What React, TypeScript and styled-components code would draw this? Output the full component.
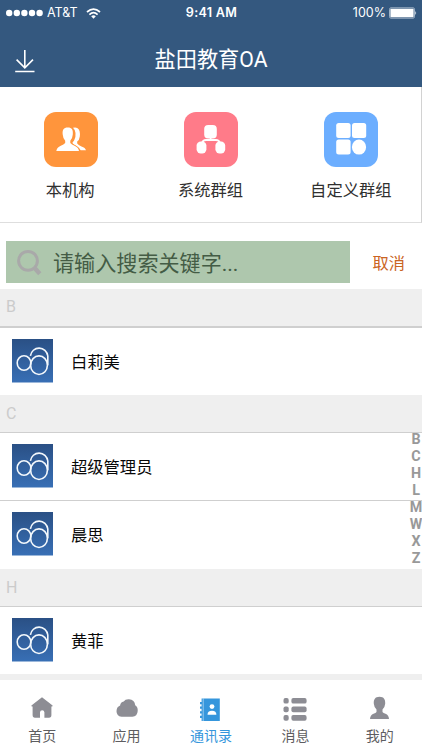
import React from "react";
import styled, { createGlobalStyle } from "styled-components";

const GlobalStyle = createGlobalStyle`
  * { box-sizing: border-box; }
  body { margin: 0; background: #fff; }
`;

const Screen = styled.div`
  position: relative;
  width: 422px;
  height: 750px;
  overflow: hidden;
  display: flex;
  flex-direction: column;
  background: #fff;
  font-family: Roboto, "Noto Sans CJK SC", sans-serif;
  white-space: nowrap;
`;

const Header = styled.header`
  height: 87px;
  flex: none;
  background: #34587f;
  color: #fff;
`;

const StatusBar = styled.div`
  height: 26px;
  padding: 0 5px 0 6px;
  display: grid;
  grid-template-columns: 1fr auto 1fr;
  align-items: center;
  font: 400 12.5px/26px Inter, sans-serif;
`;

const StatusGroup = styled.div<{ $end?: boolean }>`
  display: flex;
  align-items: center;
  justify-content: ${(p) => (p.$end ? "flex-end" : "flex-start")};
  gap: ${(p) => (p.$end ? "3px" : "4px")};
  svg { display: block; }
`;

const Carrier = styled.span`
  margin-right: 4px;
`;

const Clock = styled.span`
  font-weight: 600;
  font-size: 12.6px;
  letter-spacing: 0.3px;
`;

const TitleBar = styled.div`
  height: 61px;
  padding: 0 14px;
  display: grid;
  grid-template-columns: 40px 1fr 40px;
  align-items: center;
  svg { display: block; margin-top: 9px; }
`;

const Title = styled.h1`
  margin: 6px 0 0;
  text-align: center;
  font-size: 21.2px;
  line-height: 30px;
  font-weight: 400;
`;

const GroupGrid = styled.section`
  height: 136px;
  flex: none;
  padding: 25px 0 0;
  display: grid;
  grid-template-columns: repeat(3, 1fr);
  border-bottom: 1px solid #dedede;
  border-right: 1px solid #d2d2d2;
`;

const GroupItem = styled.div`
  display: flex;
  flex-direction: column;
  align-items: center;
  gap: 12px;
  font-size: 16.3px;
  line-height: 24px;
  color: #303030;
`;

const GroupTile = styled.div<{ $color: string }>`
  width: 54px;
  height: 55px;
  margin-left: 1px;
  border-radius: 12px;
  background: ${(p) => p.$color};
  svg { display: block; }
`;

const SearchRow = styled.div`
  height: 66px;
  flex: none;
  padding: 18px 17px 6px 6px;
  display: flex;
  align-items: center;
  justify-content: space-between;
`;

const SearchField = styled.div`
  width: 344px;
  height: 42px;
  padding-left: 10px;
  display: flex;
  align-items: center;
  gap: 11px;
  background: #aec7ad;
  color: #445c45;
  font-size: 21.1px;
  line-height: 42px;
  svg { flex: none; }
  span { padding-top: 3px; }
`;

const Cancel = styled.span`
  padding-top: 3px;
  color: #ca6423;
  font-size: 16.3px;
  line-height: 42px;
`;

const SectionHead = styled.div<{ $first?: boolean }>`
  height: ${(p) => (p.$first ? 39 : 38)}px;
  flex: none;
  padding-left: 6px;
  background: #efefef;
  border-bottom: ${(p) => (p.$first ? 2 : 1)}px solid #cfcfcf;
  color: #cbcbcb;
  font-size: 16px;
  line-height: ${(p) => (p.$first ? 35 : 37)}px;
`;

const ContactRow = styled.div<{ $divided?: boolean; $tall?: boolean }>`
  height: ${(p) => (p.$tall ? 68 : 67)}px;
  flex: none;
  padding: 11px 12px 0;
  display: flex;
  align-items: flex-start;
  gap: 18px;
  border-bottom: ${(p) => (p.$divided ? "1px solid #cfcfcf" : "none")};
  color: #080808;
  font-size: 16.3px;
  line-height: 48px;
`;

const NextSection = styled.div`
  flex: 1;
  background: #efefef;
`;

const IndexRail = styled.nav`
  position: absolute;
  right: 0;
  top: 431px;
  width: 12px;
  display: flex;
  flex-direction: column;
  align-items: center;
  color: #999;
  font-size: 14.3px;
  font-weight: 700;
  line-height: 17px;
`;

const TabBar = styled.nav`
  height: 70px;
  flex: none;
  padding-top: 15px;
  display: grid;
  grid-template-columns: repeat(5, 1fr);
  background: #fff;
`;

const Tab = styled.div<{ $active?: boolean }>`
  display: flex;
  flex-direction: column;
  align-items: center;
  gap: 3px;
  color: ${(p) => (p.$active ? "#3596dc" : "#5d5d60")};
  font-size: 14px;
  line-height: 20px;
  svg { color: ${(p) => (p.$active ? "#3596dc" : "#8d8d94")}; display: block; }
`;

const SignalIcon = () => (
  <svg width="37" height="8" viewBox="0 0 37 8" fill="#fff">
    {[3.2, 10.8, 18.4, 26, 33.6].map((x) => (
      <circle key={x} cx={x} cy="4" r="3.2" />
    ))}
  </svg>
);

const WifiIcon = () => (
  <svg width="15" height="11" viewBox="0 0 15 11" fill="none" stroke="#fff" strokeWidth="1.7">
    <path d="M1 4Q7.5-1.9 14 4" />
    <path d="M3.4 6.6Q7.5 2.8 11.6 6.6" />
    <path d="M5.2 8.3Q7.5 6.3 9.8 8.3L7.5 10.8Z" fill="#fff" stroke="none" />
  </svg>
);

const BatteryIcon = () => (
  <svg width="28" height="12" viewBox="0 0 28 12">
    <rect x=".5" y=".8" width="25" height="10.4" rx="1.5" fill="none" stroke="#b9c8d8" strokeWidth=".8" />
    <rect x="1.4" y="1.7" width="23.2" height="8.6" rx=".7" fill="#fff" />
    <path d="M26.4 4Q28 6 26.4 8Z" fill="#fff" />
  </svg>
);

const DownloadIcon = () => (
  <svg width="22" height="24" viewBox="0 0 22 24" fill="none" stroke="#fff" strokeWidth="1.6">
    <path d="M10.8 1V18.6M2.6 10.6L10.8 18.8L19 10.6M1.2 22.5H20.5" />
  </svg>
);

const PeopleIcon = () => (
  <svg width="54" height="55" viewBox="0 0 54 55" fill="#fff">
    <path d="M29 15.8Q31.5 14.8 33.6 16.2Q36.5 18 35.8 24.5Q35.4 28 33.2 29.5V31.5Q34.2 33 37.5 34.4Q41.4 35.6 42 38.3H36.6Q35.5 35.5 31.5 33.4Q28 31.8 28.6 30.3L30 28.8Q32 26 31.5 21Q31 17.5 29 15.8Z" />
    <path d="M23.8 15.5C28 15.5 29.3 18 28.8 22.5Q28.5 26.5 26.3 28.8V31Q27.5 32.6 31 34Q34.5 35.5 35 39H12.3Q12.8 35.5 16.3 34Q20 32.6 21.2 31V28.8Q19 26.5 18.7 22.5C18.2 18 19.6 15.5 23.8 15.5Z" stroke="#ff953c" strokeWidth="1.4" paintOrder="stroke" />
  </svg>
);

const HierarchyIcon = () => (
  <svg width="54" height="55" viewBox="0 0 54 55" fill="#fff">
    <rect x="20.2" y="13" width="12.6" height="13.6" rx="4" />
    <rect x="12.6" y="29.4" width="9.8" height="12" rx="4.2" />
    <rect x="31.4" y="29.4" width="9.8" height="12" rx="4.2" />
    <path d="M26.6 25V28M18 31Q19 28 22 28H32Q35 28 36 31" fill="none" stroke="#fff" strokeWidth="1.8" />
  </svg>
);

const ShapesIcon = () => (
  <svg width="54" height="55" viewBox="0 0 54 55" fill="#fff">
    <rect x="12.2" y="11" width="14.4" height="15" rx="2.5" />
    <rect x="28" y="11" width="14.2" height="15" rx="2.5" />
    <rect x="12.2" y="27.6" width="14.4" height="15" rx="2.5" />
    <ellipse cx="35" cy="35.1" rx="7.1" ry="7.5" />
  </svg>
);

const SearchIcon = () => (
  <svg width="26" height="28" viewBox="0 0 26 28" fill="none" stroke="#a9a9a9">
    <circle cx="12" cy="12.8" r="9.4" strokeWidth="3" />
    <path d="M18.6 20L23.8 25.8" strokeWidth="4.4" />
  </svg>
);

const Avatar = () => (
  <svg width="41" height="44" viewBox="0 0 41 44">
    <defs>
      <linearGradient id="avatarFill" x1="0" y1="0" x2="0" y2="1">
        <stop offset="0" stopColor="#2a5085" />
        <stop offset="1" stopColor="#386fb5" />
      </linearGradient>
    </defs>
    <path d="M0 0H41V43.4H0Z" fill="url(#avatarFill)" />
    <g fill="none" stroke="#f3f8fc" strokeWidth="1.6">
      <ellipse cx="12" cy="24" rx="6.8" ry="7.3" />
      <ellipse cx="27" cy="26.2" rx="8.4" ry="9.3" />
      <path d="M18.4 16.8A8.8 9.2 0 0 1 35.8 17V26.2" />
    </g>
  </svg>
);

const HomeIcon = () => (
  <svg width="24" height="28" viewBox="0 0 24 28" fill="currentColor">
    <path d="M12 2.3L22.6 10.4Q23 11.8 21.4 11.5V20Q21.4 22.7 19 22.7H14.4V17.2Q14.2 15.2 12.2 15.2Q10.2 15.2 10 17.2V22.7H5Q2.6 22.7 2.6 20V11.5Q1 11.8 1.4 10.4Z" />
  </svg>
);

const CloudIcon = () => (
  <svg width="24" height="28" viewBox="0 0 24 28" fill="currentColor">
    <path d="M6.5 21.7Q1.5 21 1.5 16.2Q1.6 12 5.1 10.6Q5.5 7 8.7 6.4Q10.2 4 14 4.2Q19.7 4.7 20.2 10.3Q23 12 22.7 16Q22.3 21.7 17.4 21.7Z" />
  </svg>
);

const ContactsIcon = () => (
  <svg width="24" height="28" viewBox="0 0 24 28" fill="currentColor">
    <path d="M2.6 3.5H20.8V26H2.6V23H1V20.8H2.6V18.5H1V16.3H2.6V13.8H1V11.6H2.6V9.2H1V7H2.6Z" />
    <path d="M4.2 3.5V26" stroke="#fff" strokeWidth=".5" />
    <circle cx="13" cy="11.6" r="2.4" fill="#fff" />
    <path d="M8.5 19.8Q8.5 15.8 13 15.8Q17.4 15.8 17.4 19.8Z" fill="#fff" />
  </svg>
);

const ListIcon = () => (
  <svg width="24" height="28" viewBox="0 0 24 28" fill="currentColor">
    {[3, 11.6, 20.1].map((y) => (
      <React.Fragment key={y}>
        <rect x=".5" y={y} width="5.2" height="5.6" rx="1.9" />
        <rect x="8.4" y={y} width="15.2" height="5.6" rx="1.9" />
      </React.Fragment>
    ))}
  </svg>
);

const PersonIcon = () => (
  <svg width="24" height="28" viewBox="0 0 24 28" fill="currentColor">
    <path d="M11.5 1.8C15.9 1.8 17.5 4.6 17.2 8.7Q16.8 12.6 14.5 14.5V17Q15.2 18 17.5 18.7Q20.8 20 21 24H2Q2.2 20 5.5 18.7Q7.8 18 8.5 17V14.5Q6.2 12.6 5.8 8.7C5.5 4.6 7.1 1.8 11.5 1.8Z" />
  </svg>
);

const groups = [
  { label: "本机构", color: "#ff953c", Icon: PeopleIcon },
  { label: "系统群组", color: "#ff7b89", Icon: HierarchyIcon },
  { label: "自定义群组", color: "#6caeff", Icon: ShapesIcon },
];

const sections = [
  { letter: "B", names: ["白莉美"] },
  { letter: "C", names: ["超级管理员", "晨思"] },
  { letter: "H", names: ["黄菲"] },
];

const tabs = [
  { label: "首页", Icon: HomeIcon },
  { label: "应用", Icon: CloudIcon },
  { label: "通讯录", Icon: ContactsIcon, active: true },
  { label: "消息", Icon: ListIcon },
  { label: "我的", Icon: PersonIcon },
];

export default function App() {
  return (
    <Screen>
      <GlobalStyle />
      <Header>
        <StatusBar>
          <StatusGroup>
            <SignalIcon />
            <Carrier>AT&amp;T</Carrier>
            <WifiIcon />
          </StatusGroup>
          <Clock>9:41 AM</Clock>
          <StatusGroup $end>
            <span>100%</span>
            <BatteryIcon />
          </StatusGroup>
        </StatusBar>
        <TitleBar>
          <DownloadIcon />
          <Title>盐田教育OA</Title>
        </TitleBar>
      </Header>
      <GroupGrid>
        {groups.map(({ label, color, Icon }) => (
          <GroupItem key={label}>
            <GroupTile $color={color}>
              <Icon />
            </GroupTile>
            <span>{label}</span>
          </GroupItem>
        ))}
      </GroupGrid>
      <SearchRow>
        <SearchField>
          <SearchIcon />
          <span>请输入搜索关键字...</span>
        </SearchField>
        <Cancel>取消</Cancel>
      </SearchRow>
      {sections.map(({ letter, names }, s) => (
        <React.Fragment key={letter}>
          <SectionHead $first={s === 0}>{letter}</SectionHead>
          {names.map((name, i) => (
            <ContactRow key={name} $divided={i < names.length - 1} $tall={names.length > 1}>
              <Avatar />
              <span>{name}</span>
            </ContactRow>
          ))}
        </React.Fragment>
      ))}
      <NextSection />
      <TabBar>
        {tabs.map(({ label, Icon, active }) => (
          <Tab key={label} $active={active}>
            <Icon />
            <span>{label}</span>
          </Tab>
        ))}
      </TabBar>
      <IndexRail>
        {"BCHLMWXZ".split("").map((letter) => (
          <span key={letter}>{letter}</span>
        ))}
      </IndexRail>
    </Screen>
  );
}
